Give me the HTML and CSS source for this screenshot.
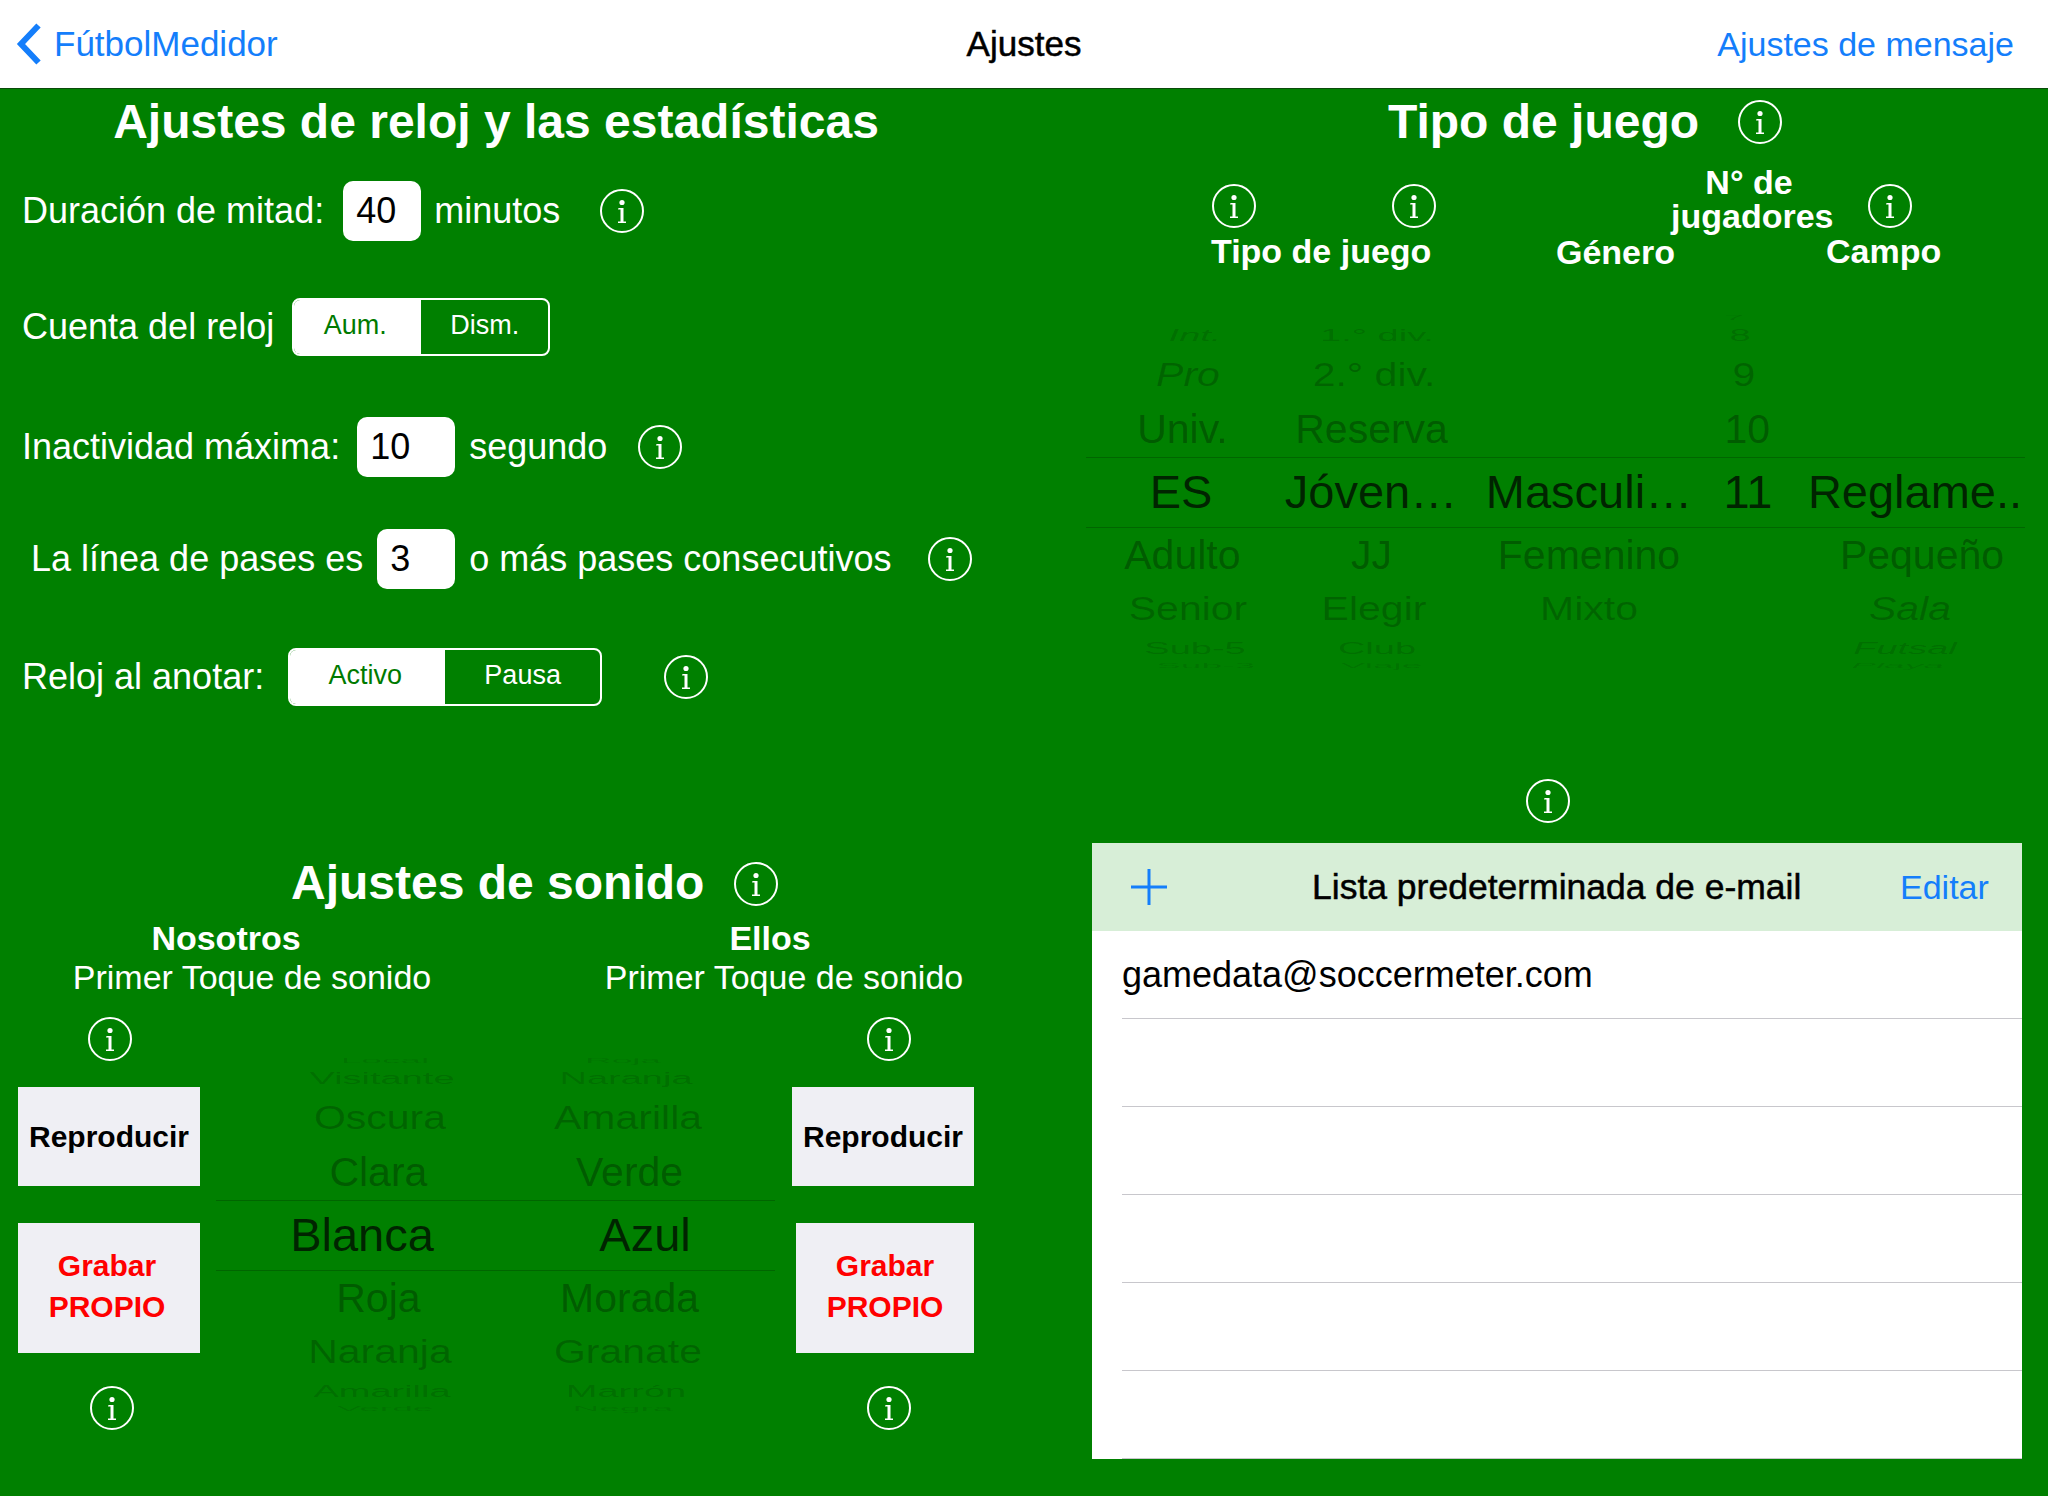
FILE: index.html
```html
<!DOCTYPE html>
<html lang="es">

<head>
    <meta charset="UTF-8">
    <meta name="viewport" content="width=device-width, initial-scale=1.0">
    <title>Ajustes</title>
    <link rel="stylesheet" href="styles.css">
</head>

<body>

    <svg class="icon-defs">
        <symbol id="info" viewBox="0 0 44 44">
            <circle cx="22" cy="22" r="21" fill="none" stroke="#fff" stroke-width="2" />
            <circle cx="22" cy="13.5" r="2.6" fill="#fff" />
            <path d="M18.5 19h5v13.5h2.5V34h-8v-1.500h2.500V20.500h-2.500z" fill="#fff" />
        </symbol>
    </svg>

    <header class="navbar">
        <a class="nav-back">
            <svg class="chevron" viewBox="0 0 26 42">
                <path d="M22.500 2.500 5 21l17.500 18.500" fill="none" stroke="#147efb" stroke-width="6" />
            </svg>
            FútbolMedidor
        </a>
        <div class="nav-title">Ajustes</div>
        <a class="nav-action">Ajustes de mensaje</a>
    </header>

    <main class="settings">

        <div class="left-col">
            <section class="clock">
                <h1 class="clock-title">Ajustes de reloj y las estadísticas</h1>
                <div class="clock-rows">
                    <div class="row">
                        <span>Duración de mitad:</span>
                        <span class="field field-40">40</span>
                        <span>minutos</span>
                        <svg class="info info-row1"><use href="#info" /></svg>
                    </div>
                    <div class="row">
                        <span>Cuenta del reloj</span>
                        <div class="segment segment-short">
                            <span class="seg-on">Aum.</span>
                            <span class="seg-off">Dism.</span>
                        </div>
                    </div>
                    <div class="row">
                        <span>Inactividad máxima:</span>
                        <span class="field field-10">10</span>
                        <span>segundo</span>
                        <svg class="info info-row3"><use href="#info" /></svg>
                    </div>
                    <div class="row row-indent">
                        <span>La línea de pases es</span>
                        <span class="field field-3">3</span>
                        <span>o más pases consecutivos</span>
                        <svg class="info info-row4"><use href="#info" /></svg>
                    </div>
                    <div class="row">
                        <span>Reloj al anotar:</span>
                        <div class="segment segment-long">
                            <span class="seg-on">Activo</span>
                            <span class="seg-off">Pausa</span>
                        </div>
                        <svg class="info info-row5"><use href="#info" /></svg>
                    </div>
                </div>
            </section>

            <section class="sound">
                <div class="sound-title">
                    <h1>Ajustes de sonido</h1>
                    <svg class="info"><use href="#info" /></svg>
                </div>
                <div class="sound-heads">
                    <div class="sound-head head-us">
                        <div class="sound-name">Nosotros</div>
                        <div class="sound-sub">Primer Toque de sonido</div>
                    </div>
                    <div class="sound-head head-them">
                        <div class="sound-name">Ellos</div>
                        <div class="sound-sub">Primer Toque de sonido</div>
                    </div>
                </div>
                <div class="sound-body">
                    <div class="controls controls-us">
                        <svg class="info info-top"><use href="#info" /></svg>
                        <button class="sound-btn play-btn">Reproducir</button>
                        <button class="sound-btn rec-btn">Grabar<br>PROPIO</button>
                        <svg class="info info-bottom"><use href="#info" /></svg>
                    </div>
                    <div class="wheel wheel-sound">
                        <div class="wheel-col col-us">
                            <div class="w-4">Local</div>
                            <div class="w-3">Visitante</div>
                            <div class="w-2">Oscura</div>
                            <div class="w-1">Clara</div>
                            <div class="w-sel">Blanca</div>
                            <div class="w-1">Roja</div>
                            <div class="w-2">Naranja</div>
                            <div class="w-3">Amarilla</div>
                            <div class="w-4">Verde</div>
                        </div>
                        <div class="wheel-col col-them">
                            <div class="w-4">Roja</div>
                            <div class="w-3">Naranja</div>
                            <div class="w-2">Amarilla</div>
                            <div class="w-1">Verde</div>
                            <div class="w-sel">Azul</div>
                            <div class="w-1">Morada</div>
                            <div class="w-2">Granate</div>
                            <div class="w-3">Marrón</div>
                            <div class="w-4">Negra</div>
                        </div>
                    </div>
                    <div class="controls controls-them">
                        <svg class="info info-top"><use href="#info" /></svg>
                        <button class="sound-btn play-btn">Reproducir</button>
                        <button class="sound-btn rec-btn">Grabar<br>PROPIO</button>
                        <svg class="info info-bottom"><use href="#info" /></svg>
                    </div>
                </div>
            </section>
        </div>

        <div class="right-col">
            <div class="game-title">
                <h1>Tipo de juego</h1>
                <svg class="info"><use href="#info" /></svg>
            </div>

            <div class="game-heads">
                <div class="head-type">
                    <div class="head-icons">
                        <svg class="info"><use href="#info" /></svg>
                        <svg class="info"><use href="#info" /></svg>
                    </div>
                    <div class="head-label">Tipo de juego</div>
                </div>
                <div class="head-gender">Género</div>
                <div class="head-players">N° de<br>jugadores</div>
                <div class="head-field">
                    <svg class="info"><use href="#info" /></svg>
                    <div class="head-label">Campo</div>
                </div>
            </div>

            <div class="wheel wheel-game">
                <div class="wheel-col col-level">
                    <div class="w-4"></div>
                    <div class="w-3 lean">Int.</div>
                    <div class="w-2 lean">Pro</div>
                    <div class="w-1">Univ.</div>
                    <div class="w-sel">ES</div>
                    <div class="w-1">Adulto</div>
                    <div class="w-2">Senior</div>
                    <div class="w-3">Sub-5</div>
                    <div class="w-4">Sub-3</div>
                </div>
                <div class="wheel-col col-div">
                    <div class="w-4"></div>
                    <div class="w-3">1.° div.</div>
                    <div class="w-2">2.° div.</div>
                    <div class="w-1">Reserva</div>
                    <div class="w-sel">Jóven…</div>
                    <div class="w-1">JJ</div>
                    <div class="w-2">Elegir</div>
                    <div class="w-3">Club</div>
                    <div class="w-4">Viaje</div>
                </div>
                <div class="wheel-col col-gender">
                    <div class="w-4"></div>
                    <div class="w-3"></div>
                    <div class="w-2"></div>
                    <div class="w-1"></div>
                    <div class="w-sel">Masculi…</div>
                    <div class="w-1">Femenino</div>
                    <div class="w-2">Mixto</div>
                </div>
                <div class="wheel-col col-players">
                    <div class="w-4">7</div>
                    <div class="w-3">8</div>
                    <div class="w-2">9</div>
                    <div class="w-1">10</div>
                    <div class="w-sel">11</div>
                </div>
                <div class="wheel-col col-field">
                    <div class="w-4"></div>
                    <div class="w-3"></div>
                    <div class="w-2"></div>
                    <div class="w-1"></div>
                    <div class="w-sel">Reglame..</div>
                    <div class="w-1">Pequeño</div>
                    <div class="w-2 lean">Sala</div>
                    <div class="w-3 lean">Futsal</div>
                    <div class="w-4 lean">Playa</div>
                </div>
            </div>

            <svg class="info info-email"><use href="#info" /></svg>

            <div class="email-table">
                <div class="email-head">
                    <svg class="plus" viewBox="0 0 36 36">
                        <path d="M18 0v36M0 18h36" fill="none" stroke="#147efb" stroke-width="3" />
                    </svg>
                    <div class="email-title">Lista predeterminada de e-mail</div>
                    <a class="email-edit">Editar</a>
                </div>
                <div class="email-row">gamedata@soccermeter.com</div>
                <div class="email-row"></div>
                <div class="email-row"></div>
                <div class="email-row"></div>
                <div class="email-row"></div>
                <div class="email-row"></div>
            </div>
        </div>

    </main>

</body>

</html>
```

FILE: styles.css
```css
* {
    box-sizing: border-box;
}

body {
    margin: 0;
    width: 2048px;
    height: 1496px;
    overflow: hidden;
    background-color: #008000;
    color: #fff;
    font-family: "Liberation Sans", Arial, sans-serif;
    font-size: 36px;
}

h1 {
    margin: 0;
    font-size: 48px;
    line-height: 64px;
    font-weight: bold;
}

.icon-defs {
    display: block;
    width: 0;
    height: 0;
}

.info {
    display: block;
    flex: none;
    width: 44px;
    height: 44px;
}

/* nav bar */

.navbar {
    display: grid;
    grid-template-columns: 1fr auto 1fr;
    align-items: center;
    height: 89px;
    padding: 0 16px;
    background-color: #fff;
    border-bottom: 1px solid #0a4a0a;
    font-size: 34px;
}

.nav-back {
    display: flex;
    align-items: center;
    gap: 12px;
    color: #147efb;
    font-size: 35px;
}

.chevron {
    width: 26px;
    height: 42px;
}

.nav-title {
    color: #000;
    font-size: 35px;
    -webkit-text-stroke: 0.5px #000;
}

.nav-action {
    justify-self: end;
    margin-right: 18px;
    color: #147efb;
}

/* page columns */

.settings {
    display: grid;
    grid-template-columns: 1086px 962px;
}

/* clock settings */

.clock {
    height: 771px;
}

.clock-title {
    width: 992px;
    height: 64px;
    padding-top: 1px;
    text-align: center;
}

.clock-rows {
    display: grid;
    grid-template-rows: 116px 116px 124px 100px 135px;
}

.row {
    display: flex;
    align-items: center;
    padding-left: 22px;
}

.row-indent {
    padding-left: 31px;
}

.field {
    height: 60px;
    padding-left: 13px;
    background-color: #fff;
    border-radius: 10px;
    color: #000;
    line-height: 60px;
}

.field-40 {
    width: 78px;
    margin: 0 13px 0 19px;
}

.field-10 {
    width: 98px;
    margin: 0 14px 0 17px;
}

.field-3 {
    width: 78px;
    margin: 0 14px;
}

.info-row1 {
    margin-left: 40px;
}

.info-row3 {
    margin-left: 31px;
}

.info-row4 {
    margin-left: 37px;
}

.info-row5 {
    margin-left: 62px;
}

.segment {
    display: grid;
    grid-template-columns: 1fr 1fr;
    height: 58px;
    margin-left: 18px;
    border: 2px solid #fff;
    border-radius: 8px;
    font-size: 27px;
    line-height: 50px;
    text-align: center;
    overflow: hidden;
}

.segment-short {
    width: 258px;
}

.segment-long {
    width: 314px;
    margin-left: 24px;
}

.seg-on {
    padding-right: 5px;
    background-color: #fff;
    color: #007a00;
}

/* sound settings */

.sound-title {
    display: flex;
    align-items: center;
    gap: 30px;
    height: 48px;
    padding-left: 291px;
}

.sound-title h1 {
    margin-bottom: 2px;
}

.sound-heads {
    display: grid;
    grid-template-columns: 504px 560px;
    margin-top: 10px;
    margin-bottom: 3px;
    font-size: 34px;
    text-align: center;
}

.sound-name {
    line-height: 40px;
    font-weight: bold;
}

.sound-sub {
    line-height: 38px;
}

.head-us .sound-name {
    margin-right: 52px;
}

.head-them .sound-name {
    margin-right: 28px;
}

.sound-body {
    display: grid;
    grid-template-columns: 216px 559px 200px;
}

.controls {
    display: flex;
    flex-direction: column;
    align-items: flex-start;
    padding-top: 18px;
}

.controls-us {
    padding-left: 18px;
}

.controls-them {
    padding-left: 17px;
}

.sound-btn {
    display: block;
    width: 182px;
    padding: 0;
    border: 0;
    background-color: #efeff4;
    font-family: inherit;
    font-size: 30px;
    font-weight: bold;
}

.play-btn {
    height: 99px;
    margin-top: 26px;
    color: #000;
}

.rec-btn {
    height: 130px;
    margin-top: 37px;
    padding-bottom: 5px;
    color: #f00;
    line-height: 41px;
}

.controls-us .rec-btn {
    padding-right: 4px;
}

.controls-them .rec-btn {
    width: 178px;
    margin-left: 4px;
}

.info-top {
    margin-left: 70px;
}

.info-bottom {
    margin-top: 33px;
    margin-left: 72px;
}

.controls-them .info-top,
.controls-them .info-bottom {
    margin-left: 75px;
}

/* picker wheels */

.wheel {
    position: relative;
    display: flex;
    height: 353px;
    white-space: nowrap;
    text-align: center;
    font-size: 41px;
}

.wheel::before {
    content: "";
    position: absolute;
    left: 0;
    right: 0;
    top: 142px;
    height: 69px;
    border-top: 1px solid rgba(0, 0, 0, 0.2);
    border-bottom: 1px solid rgba(0, 0, 0, 0.2);
}

.wheel-sound {
    margin-top: 59px;
}

.wheel-game {
    width: 939px;
}

.wheel-col {
    flex: none;
}

.w-sel {
    height: 68px;
    font-size: 47px;
    line-height: 68px;
    color: rgba(0, 0, 0, 0.72);
    transform: translateX(var(--sel, 0));
}

.w-1 {
    height: 58px;
    line-height: 58px;
    color: rgba(0, 0, 0, 0.3);
    transform: translateX(calc(var(--lean) * 0.2));
}

.w-2 {
    height: 50px;
    line-height: 50px;
    color: rgba(0, 0, 0, 0.22);
    transform: translateX(var(--lean)) scaleY(0.8);
}

.w-3 {
    height: 29px;
    line-height: 29px;
    font-size: 38px;
    color: rgba(0, 0, 0, 0.15);
    transform: translateX(calc(var(--lean) * 2)) scaleY(0.45);
}

.w-4 {
    height: 6px;
    line-height: 6px;
    font-size: 37px;
    color: rgba(0, 0, 0, 0.1);
    transform: translateX(calc(var(--lean) * 3.5)) scaleY(0.18);
}

.lean {
    font-style: italic;
}

.col-us {
    width: 324px;
    --lean: 2px;
    --sel: -16px;
}

.col-them {
    width: 180px;
    --lean: -2px;
    --sel: 15px;
}

.col-level {
    width: 190px;
    --lean: 7px;
}

.col-div {
    width: 190px;
    --lean: 3px;
}

.col-gender {
    width: 246px;
    --lean: 0px;
}

.col-players {
    width: 72px;
    --lean: -4px;
}

.col-field {
    width: 242px;
    padding-left: 20px;
    --lean: -5px;
}

.col-field .w-1 {
    transform: translateX(7px);
}

/* game type */

.game-title {
    display: flex;
    align-items: center;
    gap: 39px;
    height: 64px;
    padding-top: 2px;
    padding-left: 302px;
}

.game-heads {
    display: grid;
    grid-template-columns: 221px 234px 161px 120px;
    height: 117px;
    margin-top: 12px;
    margin-bottom: 33px;
    padding-left: 125px;
    font-size: 34px;
    font-weight: bold;
    line-height: 36px;
    white-space: nowrap;
}

.head-type {
    padding-top: 19px;
}

.head-icons {
    display: flex;
    justify-content: space-between;
    margin-left: 1px;
    margin-right: -4px;
}

.head-label {
    margin-top: 5px;
}

.head-gender {
    padding-left: 124px;
    padding-top: 69px;
}

.head-players {
    padding-left: 5px;
    line-height: 34px;
    text-align: center;
}

.head-field {
    margin-left: -1px;
    padding-top: 19px;
}

.head-field .info {
    margin-left: 42px;
}

.info-email {
    margin-top: 111px;
    margin-left: 440px;
}

/* e-mail list */

.email-table {
    width: 930px;
    margin-top: 20px;
    margin-left: 6px;
    background-color: #fff;
    color: #000;
    font-size: 36px;
}

.email-head {
    display: grid;
    grid-template-columns: 181px 588px auto;
    align-items: center;
    height: 88px;
    padding-left: 39px;
    background-color: #d7eed7;
    font-size: 34px;
}

.plus {
    width: 36px;
    height: 36px;
}

.email-title {
    font-size: 35.5px;
    -webkit-text-stroke: 0.5px #000;
}

.email-edit {
    color: #147efb;
}

.email-row {
    height: 88px;
    margin-left: 30px;
    border-bottom: 1px solid #c8c7cc;
    line-height: 88px;
}
```
